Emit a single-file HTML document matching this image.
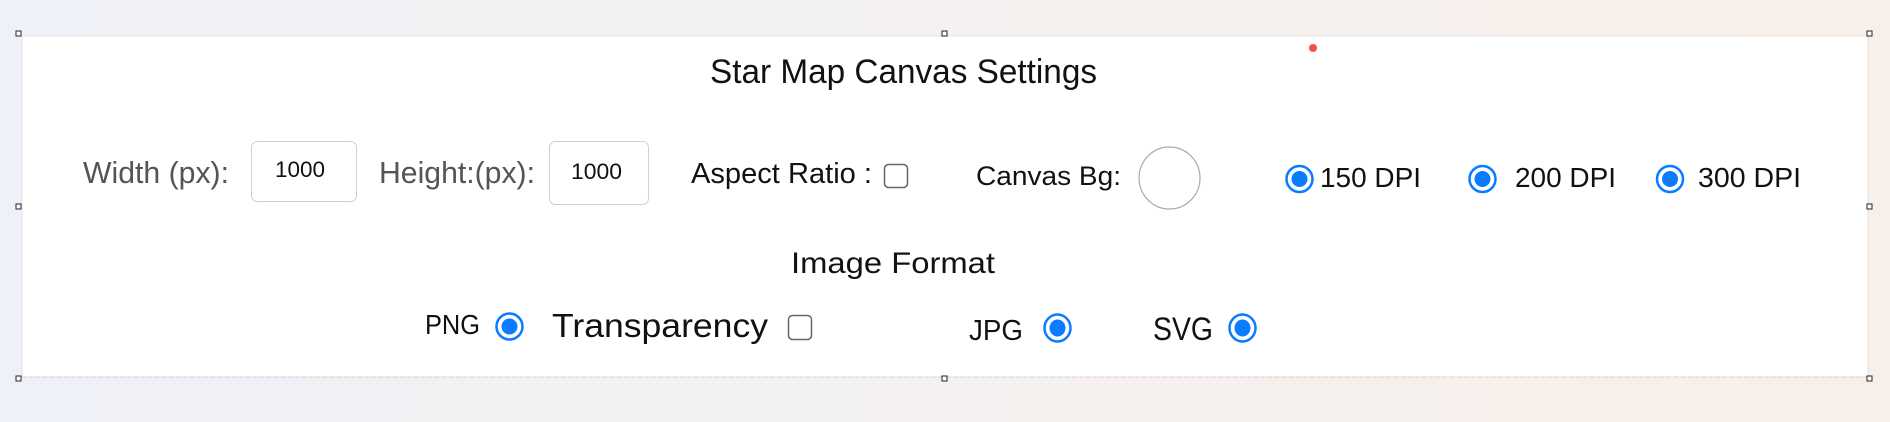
<!DOCTYPE html>
<html><head><meta charset="utf-8"><style>
html,body{margin:0;padding:0;width:1890px;height:422px;overflow:hidden;background:linear-gradient(90deg,#eef1f8,#f5f1f0 50%,#f8efe8);}
svg{display:block}
text{font-family:"Liberation Sans",sans-serif;}
</style></head><body>
<svg width="1890" height="422" viewBox="0 0 1890 422" xmlns="http://www.w3.org/2000/svg">
<rect x="22" y="36" width="1846" height="341" fill="#fff" stroke="#e2e2e2" stroke-width="1"/>
<line x1="22" y1="377" x2="1868" y2="377" stroke="#cfcfcf" stroke-dasharray="4,3"/>
<g fill="#fff" stroke="#222" stroke-width="1">
<rect x="16" y="31" width="5" height="5"/><rect x="942" y="31" width="5" height="5"/><rect x="1867" y="31" width="5" height="5"/>
<rect x="16" y="204" width="5" height="5"/><rect x="1867" y="204" width="5" height="5"/>
<rect x="16" y="376" width="5" height="5"/><rect x="942" y="376" width="5" height="5"/><rect x="1867" y="376" width="5" height="5"/>
</g>
<circle cx="1313" cy="48" r="4" fill="#f03030" opacity="0.85"/>
<text x="710" y="83" font-size="34" fill="#111" textLength="387" lengthAdjust="spacingAndGlyphs">Star Map Canvas Settings</text>
<text x="83" y="183" font-size="31" fill="#555" textLength="146" lengthAdjust="spacingAndGlyphs">Width (px):</text>
<rect x="251.5" y="141.5" width="105" height="60" rx="6" fill="#fff" stroke="#d0d0d0"/>
<text x="275" y="177" font-size="22" fill="#111" textLength="50" lengthAdjust="spacingAndGlyphs">1000</text>
<text x="379" y="183" font-size="31" fill="#555" textLength="156" lengthAdjust="spacingAndGlyphs">Height:(px):</text>
<rect x="549.5" y="141.5" width="99" height="63" rx="6" fill="#fff" stroke="#d0d0d0"/>
<text x="571" y="179" font-size="22" fill="#111" textLength="51" lengthAdjust="spacingAndGlyphs">1000</text>
<text x="691" y="183" font-size="29" fill="#111" textLength="181" lengthAdjust="spacingAndGlyphs">Aspect Ratio :</text>
<rect x="884.5" y="164.5" width="23" height="23" rx="4" fill="#fff" stroke="#666" stroke-width="1.5"/>
<text x="976" y="185" font-size="27" fill="#111" textLength="145" lengthAdjust="spacingAndGlyphs">Canvas Bg:</text>
<ellipse cx="1169.5" cy="178" rx="30.5" ry="31" fill="#fff" stroke="#aaa" stroke-width="1.2"/>
<g>
<ellipse cx="1299.5" cy="179" rx="13" ry="13" fill="#fff" stroke="#0a7cff" stroke-width="2.5"/><ellipse cx="1299.5" cy="179" rx="8" ry="8" fill="#0a7cff"/>
<ellipse cx="1482.5" cy="179" rx="13" ry="13" fill="#fff" stroke="#0a7cff" stroke-width="2.5"/><ellipse cx="1482.5" cy="179" rx="8" ry="8" fill="#0a7cff"/>
<ellipse cx="1670" cy="179" rx="13" ry="13" fill="#fff" stroke="#0a7cff" stroke-width="2.5"/><ellipse cx="1670" cy="179" rx="8" ry="8" fill="#0a7cff"/>
</g>
<text x="1320" y="187" font-size="28" fill="#111" textLength="101" lengthAdjust="spacingAndGlyphs">150 DPI</text>
<text x="1515" y="187" font-size="28" fill="#111" textLength="101" lengthAdjust="spacingAndGlyphs">200 DPI</text>
<text x="1698" y="187" font-size="28" fill="#111" textLength="103" lengthAdjust="spacingAndGlyphs">300 DPI</text>
<text x="791" y="273" font-size="30" fill="#111" textLength="204" lengthAdjust="spacingAndGlyphs">Image Format</text>
<text x="425" y="334" font-size="28" fill="#111" textLength="55" lengthAdjust="spacingAndGlyphs">PNG</text>
<ellipse cx="509.5" cy="326.5" rx="13" ry="13" fill="#fff" stroke="#0a7cff" stroke-width="2.5"/><ellipse cx="509.5" cy="326.5" rx="8" ry="8" fill="#0a7cff"/>
<text x="552" y="337" font-size="33" fill="#111" textLength="216" lengthAdjust="spacingAndGlyphs">Transparency</text>
<rect x="788.5" y="315.5" width="23" height="24" rx="4" fill="#fff" stroke="#666" stroke-width="1.5"/>
<text x="969" y="340" font-size="29" fill="#111" textLength="54" lengthAdjust="spacingAndGlyphs">JPG</text>
<ellipse cx="1057.5" cy="328" rx="13" ry="13.5" fill="#fff" stroke="#0a7cff" stroke-width="2.5"/><ellipse cx="1057.5" cy="328" rx="8" ry="8.5" fill="#0a7cff"/>
<text x="1153" y="340" font-size="32" fill="#111" textLength="60" lengthAdjust="spacingAndGlyphs">SVG</text>
<ellipse cx="1242.5" cy="328" rx="13" ry="13.5" fill="#fff" stroke="#0a7cff" stroke-width="2.5"/><ellipse cx="1242.5" cy="328" rx="8" ry="8.5" fill="#0a7cff"/>
</svg>
</body></html>
